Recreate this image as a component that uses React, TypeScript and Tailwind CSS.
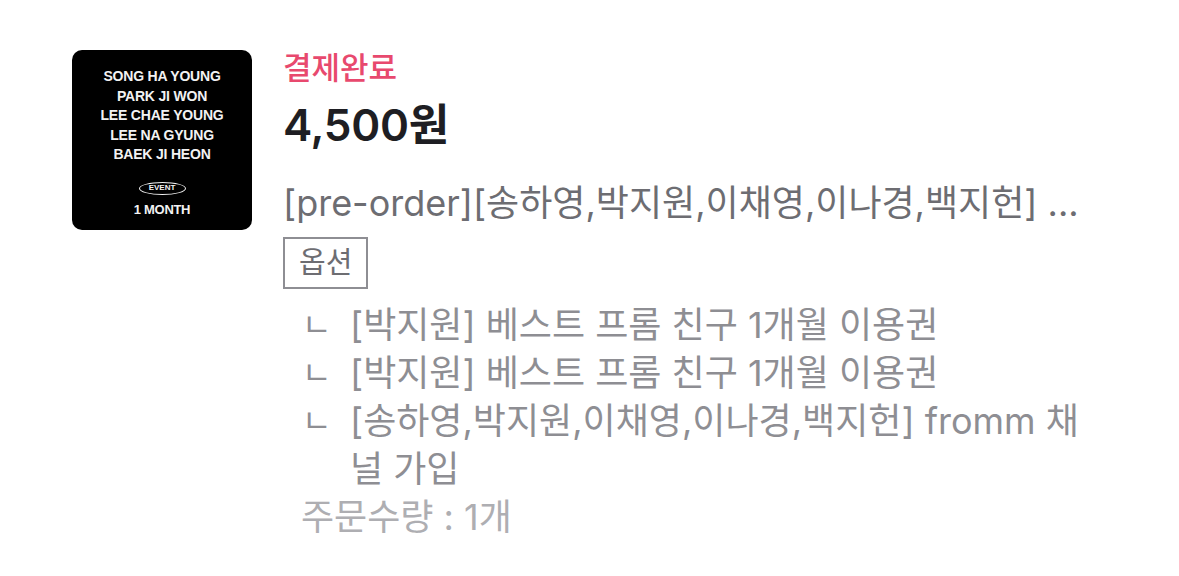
const options = [
  "[박지원] 베스트 프롬 친구 1개월 이용권",
  "[박지원] 베스트 프롬 친구 1개월 이용권",
  "[송하영,박지원,이채영,이나경,백지헌] fromm 채널 가입",
];

const names = ["SONG HA YOUNG", "PARK JI WON", "LEE CHAE YOUNG", "LEE NA GYUNG", "BAEK JI HEON"];

const Thumb = () => (
  <div className="w-[180px] h-[180px] shrink-0 rounded-[10px] bg-black flex flex-col items-center pt-[17px] text-[#f2f2f2] font-['Liberation_Sans',sans-serif] font-bold">
    {names.map((n, i) => (
      <div key={i} className="text-[14px] leading-[19.5px] tracking-[-0.2px]">
        {n}
      </div>
    ))}
    <div className="mt-[17px] border-[1.5px] border-[#f2f2f2] rounded-[50%] w-[47px] h-[13px] flex items-center justify-center text-[8px] leading-none">
      EVENT
    </div>
    <div className="mt-[7px] text-[13px] leading-[16px] tracking-[-0.3px]">1 MONTH</div>
  </div>
);

export default function App() {
  return (
    <div className="w-[1179px] h-[576px] bg-white font-['Inter','Noto_Sans_CJK_KR',sans-serif]">
      <div className="flex gap-[31px] pl-[72px] pt-[50px]">
        <Thumb />
        <div className="w-[810px] flex flex-col">
          <div className="text-[31px] leading-[36px] text-[#e8496e] font-medium">결제완료</div>
          <div className="mt-[13px] text-[44px] leading-[52px] font-semibold text-[#1e1e23] tracking-[-0.3px]">4,500원</div>
          <div className="mt-[30px] text-[36px] leading-[44px] text-[#6d6d72] whitespace-nowrap overflow-hidden">
            [pre-order][송하영,박지원,이채영,이나경,백지헌] ...
          </div>
          <div className="mt-[12px] self-start border-2 border-[#8e8e93] px-[14px] h-[52px] flex items-center text-[29px] text-[#6d6d72]">
            옵션
          </div>
          <div className="mt-[12px] flex flex-col">
            {options.map((o, i) => (
              <div key={i} className="flex text-[36px] leading-[48px] text-[#8e8e93]">
                <span className="w-[67px] shrink-0 pl-[19px] text-[32px]">ㄴ</span>
                <span className="w-[740px]">{o}</span>
              </div>
            ))}
          </div>
          <div className="pl-[18px] text-[36px] leading-[48px] text-[#aeaeb2]">
            주문수량 : 1개
          </div>
        </div>
      </div>
    </div>
  );
}
